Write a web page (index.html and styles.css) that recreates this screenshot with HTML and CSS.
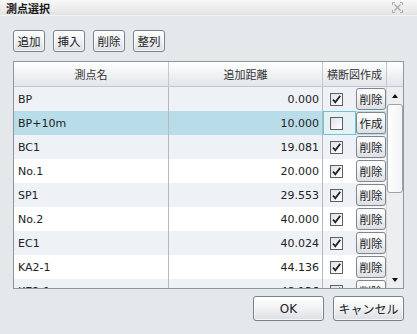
FILE: index.html
```html
<!DOCTYPE html>
<html lang="ja">
<head>
  <meta charset="UTF-8" />
  <title>測点選択</title>
  <link rel="stylesheet" href="styles.css">
</head>
<body>

<div class="dialog">
  <div class="titlebar">
    <span class="title">測点選択</span>
    <svg class="close" width="11" height="11" viewBox="0 0 11 11">
      <path d="M0.5 3V0.5H3M8 0.5H10.5V3M10.5 8V10.5H8M3 10.5H0.5V8" fill="none" stroke="#a9a9a9" stroke-width="1"/>
      <path d="M2.5 2.5L8.5 8.5M8.5 2.5L2.5 8.5" stroke="#a9a9a9" stroke-width="1.4"/>
    </svg>
  </div>

  <div class="toolbar">
    <button class="btn">追加</button>
    <button class="btn">挿入</button>
    <button class="btn">削除</button>
    <button class="btn">整列</button>
  </div>

  <div class="grid">
    <div class="grid-head">
      <div class="hcell">測点名</div>
      <div class="hcell">追加距離</div>
      <div class="hcell">横断図作成</div>
      <div class="hcell corner"></div>
    </div>
    <div class="grid-body">
      <div class="rows">
        <div class="row alt">
          <div class="cell name">BP</div>
          <div class="cell dist">0.000</div>
          <div class="cell act"><span class="cb-wrap"><span class="check"><svg width="11" height="11" viewBox="0 0 11 11"><path d="M2 5.5L4.3 8.3L9.2 1.8" fill="none" stroke="#222" stroke-width="1.8"/></svg></span></span><button class="cellbtn">削除</button></div>
        </div>
        <div class="row selected">
          <div class="cell name">BP+10m</div>
          <div class="cell dist">10.000</div>
          <div class="cell act"><span class="cb-wrap focus"><span class="check"></span></span><button class="cellbtn">作成</button></div>
        </div>
        <div class="row alt">
          <div class="cell name">BC1</div>
          <div class="cell dist">19.081</div>
          <div class="cell act"><span class="cb-wrap"><span class="check"><svg width="11" height="11" viewBox="0 0 11 11"><path d="M2 5.5L4.3 8.3L9.2 1.8" fill="none" stroke="#222" stroke-width="1.8"/></svg></span></span><button class="cellbtn">削除</button></div>
        </div>
        <div class="row">
          <div class="cell name">No.1</div>
          <div class="cell dist">20.000</div>
          <div class="cell act"><span class="cb-wrap"><span class="check"><svg width="11" height="11" viewBox="0 0 11 11"><path d="M2 5.5L4.3 8.3L9.2 1.8" fill="none" stroke="#222" stroke-width="1.8"/></svg></span></span><button class="cellbtn">削除</button></div>
        </div>
        <div class="row alt">
          <div class="cell name">SP1</div>
          <div class="cell dist">29.553</div>
          <div class="cell act"><span class="cb-wrap"><span class="check"><svg width="11" height="11" viewBox="0 0 11 11"><path d="M2 5.5L4.3 8.3L9.2 1.8" fill="none" stroke="#222" stroke-width="1.8"/></svg></span></span><button class="cellbtn">削除</button></div>
        </div>
        <div class="row">
          <div class="cell name">No.2</div>
          <div class="cell dist">40.000</div>
          <div class="cell act"><span class="cb-wrap"><span class="check"><svg width="11" height="11" viewBox="0 0 11 11"><path d="M2 5.5L4.3 8.3L9.2 1.8" fill="none" stroke="#222" stroke-width="1.8"/></svg></span></span><button class="cellbtn">削除</button></div>
        </div>
        <div class="row alt">
          <div class="cell name">EC1</div>
          <div class="cell dist">40.024</div>
          <div class="cell act"><span class="cb-wrap"><span class="check"><svg width="11" height="11" viewBox="0 0 11 11"><path d="M2 5.5L4.3 8.3L9.2 1.8" fill="none" stroke="#222" stroke-width="1.8"/></svg></span></span><button class="cellbtn">削除</button></div>
        </div>
        <div class="row">
          <div class="cell name">KA2-1</div>
          <div class="cell dist">44.136</div>
          <div class="cell act"><span class="cb-wrap"><span class="check"><svg width="11" height="11" viewBox="0 0 11 11"><path d="M2 5.5L4.3 8.3L9.2 1.8" fill="none" stroke="#222" stroke-width="1.8"/></svg></span></span><button class="cellbtn">削除</button></div>
        </div>
        <div class="row alt">
          <div class="cell name">KE2-1</div>
          <div class="cell dist">48.136</div>
          <div class="cell act"><span class="cb-wrap"><span class="check"><svg width="11" height="11" viewBox="0 0 11 11"><path d="M2 5.5L4.3 8.3L9.2 1.8" fill="none" stroke="#222" stroke-width="1.8"/></svg></span></span><button class="cellbtn">削除</button></div>
        </div>
      </div>
      <div class="vscroll">
        <div class="arrow up"></div>
        <div class="thumb"></div>
        <div class="track"></div>
        <div class="arrow down"></div>
      </div>
    </div>
  </div>

  <div class="footer">
    <button class="btn big">OK</button>
    <button class="btn big">キャンセル</button>
  </div>
</div>

</body>
</html>
```

FILE: styles.css
```css
* { box-sizing: border-box; }
body {
  margin: 0;
  font-family: "DejaVu Sans", "Noto Sans CJK JP", sans-serif;
  font-size: 11px;
  color: #222;
  background: #e5e8eb;
}
.dialog {
  width: 417px;
  height: 334px;
  background: #e5e8eb;
}
.titlebar {
  height: 16px;
  padding: 0 14px 0 6px;
  display: flex;
  justify-content: space-between;
  align-items: center;
  background: linear-gradient(to bottom, #f8f8f8, #e2e3e5);
  border-bottom: 1px solid #f2f3f4;
}
.title {
  font-family: "Noto Sans CJK JP", sans-serif;
  font-weight: bold;
  font-size: 11px;
  color: #1a1a1a;
}
.close { display: block; }
.toolbar {
  display: flex;
  gap: 8px;
  padding: 14px 13px 0;
}
.btn {
  height: 22px;
  width: 32px;
  padding: 0;
  font-family: "DejaVu Sans", "Noto Sans CJK JP", sans-serif;
  font-size: 11.5px;
  color: #222;
  border: 1px solid #76828e;
  border-radius: 3px;
  background: linear-gradient(to bottom, #ffffff, #f1f2f4 45%, #dcdfe3);
  box-shadow: inset 0 0 0 1px rgba(255,255,255,0.7);
}
.grid {
  margin: 9px 13px 0;
  height: 228px;
  border: 1px solid #8e969e;
  background: #fff;
  display: flex;
  flex-direction: column;
  overflow: hidden;
}
.grid-head {
  display: grid;
  grid-template-columns: 155px 154px 64px 17px;
  height: 25px;
  flex: none;
  background: linear-gradient(to bottom, #ffffff, #f0f2f4 50%, #e2e6ea);
  border-bottom: 1px solid #c3c8ce;
}
.hcell {
  display: flex;
  align-items: center;
  justify-content: center;
  border-right: 1px solid #c3c8ce;
  font-family: "Noto Sans CJK JP", sans-serif;
  font-size: 11px;
  color: #333;
}
.hcell.corner { border-right: none; }
.grid-body {
  flex: 1;
  display: flex;
  overflow: hidden;
}
.rows {
  width: 373px;
  overflow: hidden;
}
.row {
  display: grid;
  grid-template-columns: 155px 154px 64px;
  height: 24px;
  background: #fff;
}
.row.alt { background: #eef2f7; }
.row.selected { background: #b9dde8; }
.cell {
  display: flex;
  align-items: center;
  white-space: nowrap;
}
.name {
  padding-left: 4px;
  border-right: 1px solid #b4b9be;
}
.dist {
  justify-content: flex-end;
  padding-right: 3px;
  border-right: 1px solid #b4b9be;
}
.act { align-items: stretch; }
.cb-wrap {
  width: 33px;
  display: flex;
  align-items: center;
  padding-left: 6px;
  border: 1px solid transparent;
}
.cb-wrap.focus {
  background: #e4f2f6;
  border-color: #6fc3d6;
}
.check {
  width: 13px;
  height: 13px;
  border: 1px solid #5c6066;
  background: linear-gradient(to bottom right, #dfe1e4, #ffffff);
  display: flex;
  align-items: center;
  justify-content: center;
}
.check svg { display: block; }
.cellbtn {
  width: 30px;
  height: 22px;
  margin: 1px 0;
  padding: 0;
  font-family: "Noto Sans CJK JP", sans-serif;
  font-size: 11.5px;
  color: #222;
  border: 1px solid #7d8792;
  border-radius: 3px;
  background: linear-gradient(to bottom, #ffffff, #f1f2f4 45%, #dcdfe3);
}
.vscroll {
  width: 17px;
  display: flex;
  flex-direction: column;
  background: #eceef0;
  border-left: 1px solid #d3d7db;
}
.arrow {
  height: 17px;
  flex: none;
  display: flex;
  justify-content: center;
  align-items: center;
}
.arrow.up::before {
  content: "";
  border: 3px solid transparent;
  border-top: none;
  border-bottom: 4px solid #111;
}
.arrow.down::before {
  content: "";
  border: 3px solid transparent;
  border-bottom: none;
  border-top: 4px solid #111;
}
.thumb {
  height: 89px;
  flex: none;
  margin: 0 0 0 0;
  border: 1px solid #9aa2aa;
  border-radius: 3px;
  background: linear-gradient(to right, #ffffff, #f3f4f6);
}
.track { flex: 1; }
.footer {
  display: flex;
  justify-content: flex-end;
  gap: 9px;
  padding: 7px 13px 0;
}
.btn.big {
  width: 71px;
  height: 25px;
  font-size: 12px;
}
```
